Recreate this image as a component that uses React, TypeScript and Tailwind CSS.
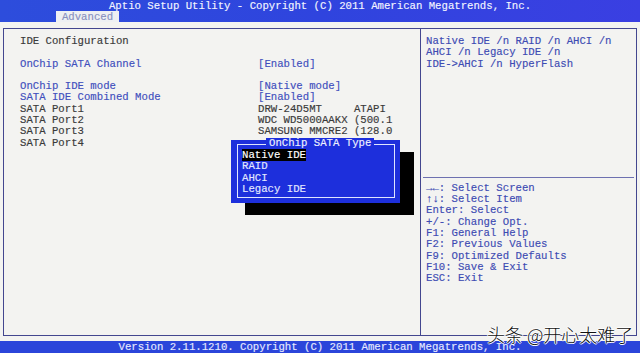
const MONO = "font-['Liberation_Mono','DejaVu_Sans_Mono',monospace]";

const ROWS: { label: string; value: string; blue?: boolean; valueBlue?: boolean }[] = [
  { label: "IDE Configuration", value: "" },
  { label: "", value: "" },
  { label: "OnChip SATA Channel", value: "[Enabled]", blue: true, valueBlue: true },
  { label: "", value: "" },
  { label: "OnChip IDE mode", value: "[Native mode]", blue: true, valueBlue: true },
  { label: "SATA IDE Combined Mode", value: "[Enabled]", blue: true, valueBlue: true },
  { label: "SATA Port1", value: "DRW-24D5MT     ATAPI" },
  { label: "SATA Port2", value: "WDC WD5000AAKX (500.1" },
  { label: "SATA Port3", value: "SAMSUNG MMCRE2 (128.0" },
  { label: "SATA Port4", value: "" },
];

const HELP = [
  "→←: Select Screen",
  "↑↓: Select Item",
  "Enter: Select",
  "+/-: Change Opt.",
  "F1: General Help",
  "F2: Previous Values",
  "F9: Optimized Defaults",
  "F10: Save & Exit",
  "ESC: Exit",
];

const OPTIONS = ["Native IDE", "RAID", "AHCI", "Legacy IDE"];

export default function App() {
  return (
    <div className={`relative w-[640px] h-[353px] overflow-hidden bg-[#f3f3f1] ${MONO} text-[10.67px] leading-[11.3px] whitespace-pre [-webkit-text-stroke:0.15px]`}>
      {/* Header */}
      <div className="h-[22px] bg-gradient-to-r from-[#2d4ddc] via-[#2f44de] to-[#3a3fe2] flex flex-col">
        <div className="h-[11px] pt-[1px] text-center text-[#f2f4ff] leading-[10px]">
          Aptio Setup Utility - Copyright (C) 2011 American Megatrends, Inc.
        </div>
        <div className="h-[11px] flex">
          <div className="ml-[56px] w-[63px] bg-[#eef0f3] text-[#8790c0] text-center leading-[12px]">Advanced</div>
        </div>
      </div>

      {/* Frame */}
      <div className="pt-[6px] pl-[3px]">
        <div className="w-[634px] h-[308px] border border-[#43468f] flex">
          {/* Left panel */}
          <div className="w-[417px] border-r border-[#43468f] pt-[7px] pl-[16px]">
            {ROWS.map((r, i) => (
              <div key={i} className="flex h-[11.3px]">
                <div className={`w-[238px] ${r.blue ? "text-[#3f4fbd]" : "text-[#3a3a3a]"}`}>{r.label}</div>
                <div className={r.valueBlue ? "text-[#3f4fbd]" : "text-[#3a3a3a]"}>{r.value}</div>
              </div>
            ))}
          </div>

          {/* Right panel */}
          <div className="flex-1 pt-[7px] flex flex-col text-[#3d4bb3]">
            <div className="h-[135.6px] pl-[5px]">
              <div>Native IDE /n RAID /n AHCI /n</div>
              <div>AHCI /n Legacy IDE /n</div>
              <div>IDE-&gt;AHCI /n HyperFlash</div>
            </div>
            <div className="h-[11.3px] flex items-center px-[2px]">
              <div className="w-full border-t border-[#6d70b0]" />
            </div>
            <div className="pl-[5px]">
              {HELP.map((h) => (
                <div key={h}>{h}</div>
              ))}
            </div>
          </div>
        </div>
      </div>

      {/* Footer */}
      <div className="mt-[5px] h-[12px] bg-[#2b45da] text-center text-[#e6e9ff] leading-[12px]">
        Version 2.11.1210. Copyright (C) 2011 American Megatrends, Inc.
      </div>

      {/* Popup */}
      <div className="absolute left-[231px] top-[140px] w-[169px] h-[63px] bg-[#1d2fdc] shadow-[14px_12px_0_#000]">
        <div className="absolute left-[6px] right-[5px] top-[3.5px] bottom-[5px] border border-[#dfe5ff]" />
        <div className="absolute left-[35px] top-[-2px] px-[3px] bg-[#1d2fdc] text-[#eef1ff]">OnChip SATA Type</div>
        <div className="relative pt-[10.2px] pl-[11px] text-[#e3e8ff]">
          {OPTIONS.map((o, i) => (
            <div key={o} className="h-[11.3px]">
              <span className={i === 0 ? "bg-black text-white" : ""}>{o}</span>
            </div>
          ))}
        </div>
      </div>

      {/* Watermark */}
      <div className="absolute left-[487px] top-[323px] font-['Noto_Sans_CJK_SC',sans-serif] font-light text-[18px] leading-[22px] text-[#111] [-webkit-text-stroke:0px] [text-shadow:1px_0_0_#fff,-1px_0_0_#fff,0_1px_0_#fff,0_-1px_0_#fff]">
        头条 @开心太难了
      </div>
    </div>
  );
}
